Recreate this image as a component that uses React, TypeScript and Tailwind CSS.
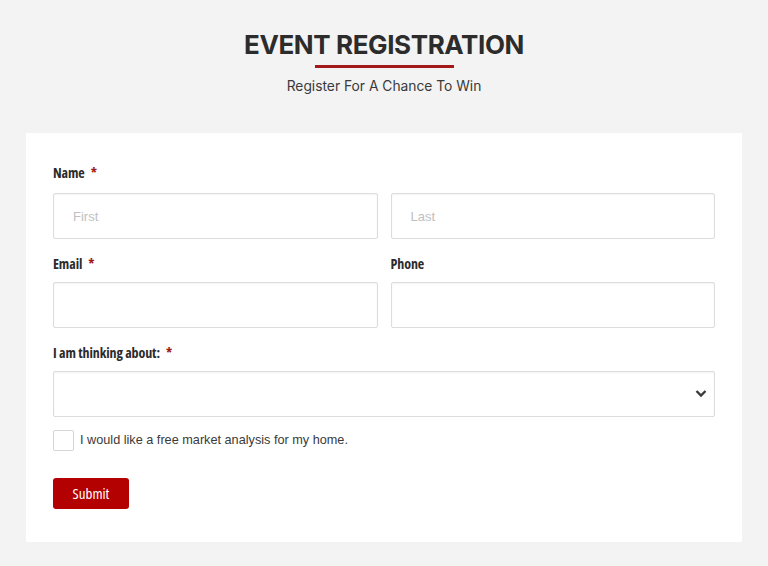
import { useState } from "react";

const labelFont = {
  fontFamily: '"Liberation Sans Narrow", "Open Sans", sans-serif',
};

function FieldLabel({ text, required }: { text: string; required?: boolean }) {
  return (
    <label
      style={labelFont}
      className="block h-[20px] text-[14px] font-bold leading-[20px] tracking-[-0.1px] text-[#2b2b2b] [font-stretch:condensed]"
    >
      {text}
      {required && <span className="ml-[6px] text-[#a01818]">*</span>}
    </label>
  );
}

const inputClass =
  "h-[46px] w-full rounded-[2px] border border-[#dcdcdc] bg-white px-[19px] font-['Liberation_Sans',sans-serif] text-[13px] text-[#333] shadow-[inset_0_1px_2px_rgba(0,0,0,0.05)] placeholder:text-[#c0c0c0] focus:outline-none";

export default function App() {
  const [wantsAnalysis, setWantsAnalysis] = useState(false);

  return (
    <div className="min-h-[566px] w-full bg-[#f3f3f3] pt-[29px]">
      <div className="flex flex-col items-center">
        <h1 className="font-['Inter',sans-serif] text-[26px] font-bold leading-[32px] tracking-[-0.4px] text-[#2c2c2c]">
          EVENT REGISTRATION
        </h1>
        <div className="mt-[4px] h-[3px] w-[139px] bg-[#a31919]" />
        <p className="mt-[9px] font-['Inter',sans-serif] text-[13.8px] leading-[18px] text-[#3a3a3a]">
          Register For A Chance To Win
        </p>
      </div>

      <form
        className="mx-[26px] mt-[38px] bg-white px-[27px] pb-[33px] pt-[30px]"
        onSubmit={(event) => event.preventDefault()}
      >
        <FieldLabel text="Name" required />
        <div className="mt-[10px] grid grid-cols-2 gap-[13px]">
          <input className={inputClass} placeholder="First" />
          <input className={inputClass} placeholder="Last" />
        </div>

        <div className="mt-[15px] grid grid-cols-2 gap-[13px]">
          <div>
            <FieldLabel text="Email" required />
            <input className={`${inputClass} mt-[8px]`} />
          </div>
          <div>
            <FieldLabel text="Phone" />
            <input className={`${inputClass} mt-[8px]`} />
          </div>
        </div>

        <div className="mt-[15px]">
          <FieldLabel text="I am thinking about:" required />
          <div className="relative mt-[8px]">
            <select
              className={`${inputClass} appearance-none`}
              defaultValue=""
            >
              <option value="" />
              <option value="buying">Buying</option>
              <option value="selling">Selling</option>
            </select>
            <svg
              className="pointer-events-none absolute right-[8px] top-[18px]"
              width="12"
              height="9"
              viewBox="0 0 12 9"
            >
              <path
                d="M1.5 2 L6 6.5 L10.5 2"
                fill="none"
                stroke="#3a3a3a"
                strokeWidth="2.4"
              />
            </svg>
          </div>
        </div>

        <label className="mt-[13px] flex items-center gap-[6px]">
          <input
            type="checkbox"
            checked={wantsAnalysis}
            onChange={(event) => setWantsAnalysis(event.target.checked)}
            className="h-[21px] w-[21px] appearance-none rounded-[2px] border border-[#d6d6d6] bg-white checked:bg-[#b30000]"
          />
          <span className="font-['Liberation_Sans',sans-serif] text-[12.7px] text-[#3a3a3a]">
            I would like a free market analysis for my home.
          </span>
        </label>

        <button
          type="submit"
          style={labelFont}
          className="mt-[27px] h-[31px] w-[76px] rounded-[3px] bg-[#b30000] text-[15px] text-white [font-stretch:condensed]"
        >
          Submit
        </button>
      </form>
    </div>
  );
}
